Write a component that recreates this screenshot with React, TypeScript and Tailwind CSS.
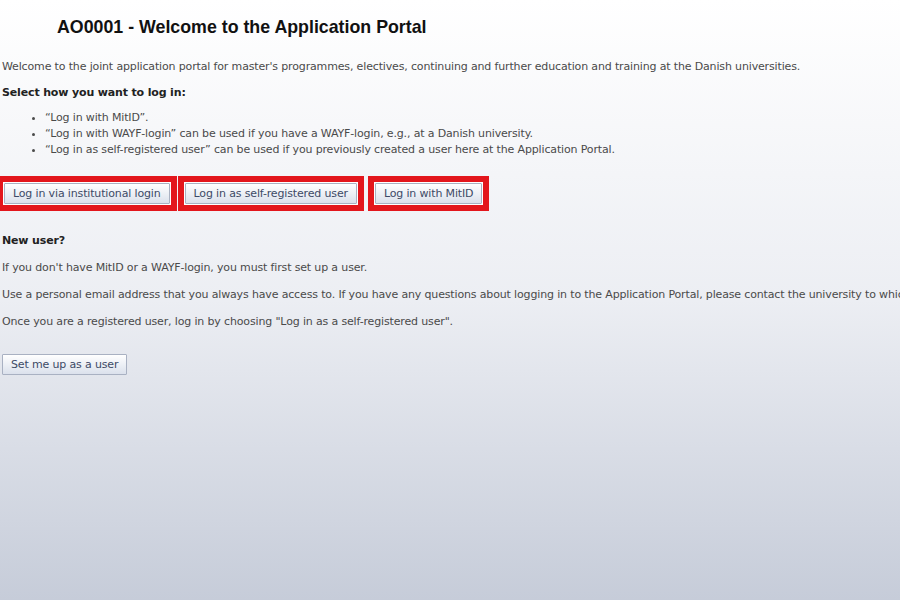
import React from "react";

const Btn = ({ children }: { children: React.ReactNode }) => (
  <button className="h-[21px] px-[8px] border border-[#a9b1c2] rounded-[1px] bg-gradient-to-b from-white to-[#dbe1ec] text-[#3d4a66] text-[11px] tracking-[-0.15px] leading-[19px] whitespace-nowrap">
    {children}
  </button>
);

const Framed = ({ children }: { children: React.ReactNode }) => (
  <div className="border-[6px] border-[#e3161c] p-[1px] bg-white flex">{children}</div>
);

export default function App() {
  return (
    <div
      className="w-[900px] h-[600px] overflow-hidden bg-gradient-to-b from-white via-[#eceef3] to-[#c6ccd9] text-[#4a4a4a]"
      style={{ fontFamily: '"DejaVu Sans", Verdana, sans-serif' }}
    >
      <h1
        className="pl-[57px] pt-[17px] text-[17.8px] leading-[20px] font-bold text-[#111]"
        style={{ fontFamily: '"Liberation Sans", Arial, sans-serif' }}
      >
        AO0001 - Welcome to the Application Portal
      </h1>
      <div className="pl-[2px] text-[11px] tracking-[-0.15px] leading-[16px]">
        <p className="mt-[22px] whitespace-nowrap">
          Welcome to the joint application portal for master's programmes, electives, continuing and further education and training at the Danish universities.
        </p>
        <p className="mt-[10px] font-bold text-[#222]">Select how you want to log in:</p>
        <ul className="mt-[9px] pl-[43px] list-disc">
          <li>“Log in with MitID”.</li>
          <li>“Log in with WAYF-login” can be used if you have a WAYF-login, e.g., at a Danish university.</li>
          <li>“Log in as self-registered user” can be used if you previously created a user here at the Application Portal.</li>
        </ul>
      </div>
      <div className="mt-[18px] ml-[-3px] flex items-start gap-[1px]">
        <Framed>
          <Btn>Log in via institutional login</Btn>
        </Framed>
        <Framed>
          <Btn>Log in as self-registered user</Btn>
        </Framed>
        <div className="ml-[3px]">
          <Framed>
            <Btn>Log in with MitID</Btn>
          </Framed>
        </div>
      </div>
      <div className="pl-[2px] text-[11px] tracking-[-0.15px] leading-[16px]">
        <p className="mt-[22px] font-bold text-[#222]">New user?</p>
        <p className="mt-[11px] whitespace-nowrap">If you don't have MitID or a WAYF-login, you must first set up a user.</p>
        <p className="mt-[11px] whitespace-nowrap">
          Use a personal email address that you always have access to. If you have any questions about logging in to the Application Portal, please contact the university to which you are applying.
        </p>
        <p className="mt-[11px] whitespace-nowrap">Once you are a registered user, log in by choosing "Log in as a self-registered user".</p>
      </div>
      <div className="mt-[21px] pl-[2px]">
        <Btn>Set me up as a user</Btn>
      </div>
    </div>
  );
}
